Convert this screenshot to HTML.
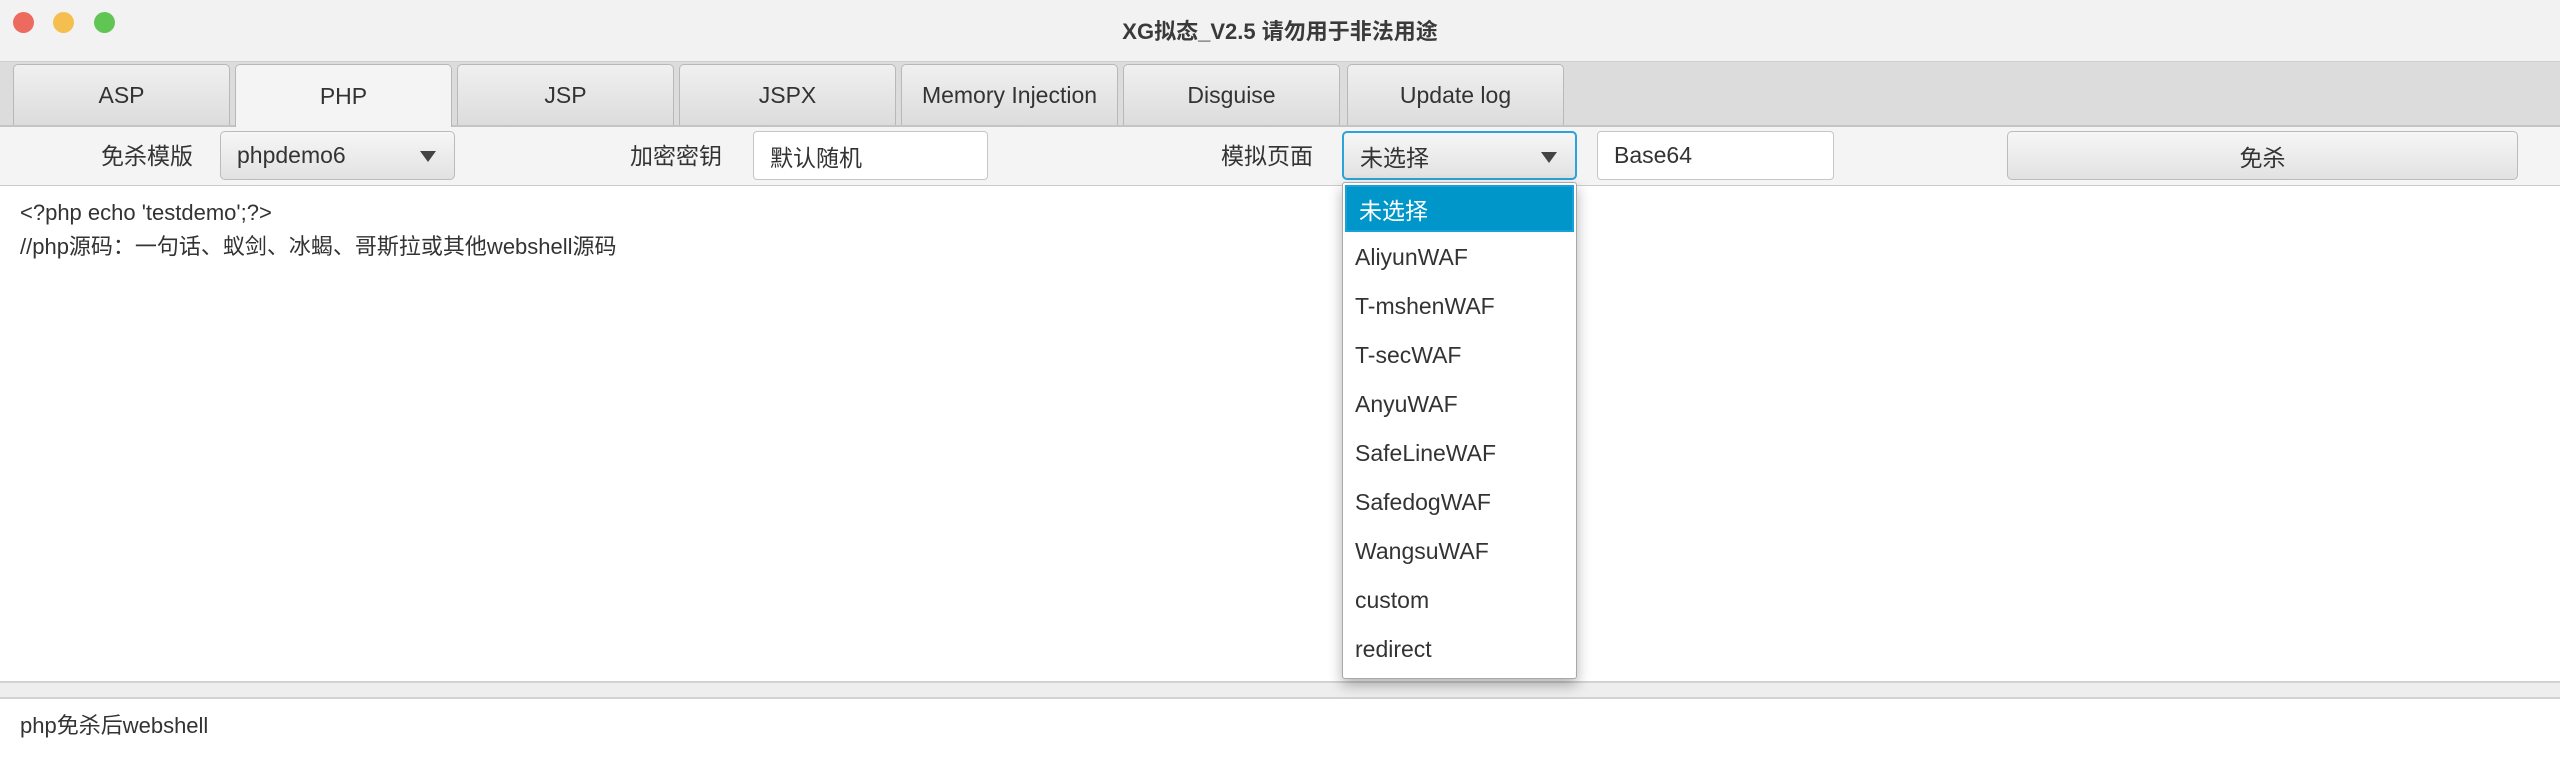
<!DOCTYPE html>
<html><head><meta charset="utf-8"><style>
*{box-sizing:border-box;margin:0;padding:0}
body{width:2560px;height:760px;overflow:hidden;background:#f4f4f4;font-family:"Liberation Sans","Noto Sans CJK SC",sans-serif;color:#333;position:relative;font-size:22px}
.abs{position:absolute}
.title{left:0;top:0;width:2560px;height:62px;background:#f2f2f2;border-bottom:1px solid #cfcfcf}
.dot{width:21px;height:21px;border-radius:50%;top:12px}
.tabs{left:0;top:62px;width:2560px;height:65px;background:#dcdcdc;border-bottom:2px solid #c4c4c4}
.tab{top:2px;width:217px;height:61px;border:1px solid #b8b8b8;border-bottom:none;border-radius:5px 5px 0 0;background:linear-gradient(#f0f0f0,#dcdcdc);display:flex;align-items:center;justify-content:center;font-size:23px;color:#333}
.tab.sel{background:#f4f4f4;height:63px}
.lbl{top:137px;font-size:23px;color:#333}
.combo{top:131px;height:49px;border:1px solid #bbb;border-radius:5px;background:linear-gradient(#f6f6f6,#e2e2e2);font-size:23px;padding:0 16px;display:flex;align-items:center}
.combo .arr{position:absolute;right:18px;top:19px;width:0;height:0;border-left:8px solid transparent;border-right:8px solid transparent;border-top:11px solid #444}
.field{top:131px;height:49px;border:1px solid #c6c6c6;border-radius:4px;background:#fff;font-size:23px;padding:0 16px;display:flex;align-items:center}
.area{left:0;width:2560px;background:#fff}
.drop{left:1342px;top:182px;width:235px;height:497px;background:#fff;border:1px solid #a8a8a8;border-radius:3px;box-shadow:0 6px 14px rgba(0,0,0,.3)}
.it{position:absolute;left:0;width:233px;height:49px;padding-left:12px;display:flex;align-items:center;font-size:23px;color:#333}
</style></head><body>
<div class="abs title"></div>
<div class="abs dot" style="left:13px;background:#ed6a5e"></div>
<div class="abs dot" style="left:53px;background:#f5bf4f"></div>
<div class="abs dot" style="left:94px;background:#61c554"></div>
<div class="abs" style="left:0;width:2560px;top:14px;text-align:center;font-weight:bold;font-size:22px;color:#3a3a3a">XG拟态_V2.5 请勿用于非法用途</div>
<div class="abs tabs"></div>
<div class="abs tab" style="left:13px;top:64px">ASP</div>
<div class="abs tab sel" style="left:235px;top:64px">PHP</div>
<div class="abs tab" style="left:457px;top:64px">JSP</div>
<div class="abs tab" style="left:679px;top:64px">JSPX</div>
<div class="abs tab" style="left:901px;top:64px">Memory Injection</div>
<div class="abs tab" style="left:1123px;top:64px">Disguise</div>
<div class="abs tab" style="left:1347px;top:64px">Update log</div>
<div class="abs lbl" style="left:101px">免杀模版</div>
<div class="abs combo" style="left:220px;width:235px">phpdemo6<span class="arr"></span></div>
<div class="abs lbl" style="left:630px">加密密钥</div>
<div class="abs field" style="left:753px;width:235px">默认随机</div>
<div class="abs lbl" style="left:1221px">模拟页面</div>
<div class="abs combo" style="left:1342px;width:235px;border:2px solid #2ba3d8">未选择<span class="arr"></span></div>
<div class="abs field" style="left:1597px;width:237px">Base64</div>
<div class="abs combo" style="left:2007px;width:511px;justify-content:center">免杀</div>
<div class="abs area" style="top:185px;height:496px;border-top:1px solid #ccc"></div>
<div class="abs" style="left:20px;top:196px;font-size:22px;line-height:34px;color:#333">&lt;?php echo 'testdemo';?&gt;<br>//php源码：一句话、蚁剑、冰蝎、哥斯拉或其他webshell源码</div>
<div class="abs" style="left:0;top:681px;width:2560px;height:18px;background:#eee;border-top:2px solid #d2d2d2;border-bottom:2px solid #d2d2d2"></div>
<div class="abs area" style="top:699px;height:61px"></div>
<div class="abs" style="left:20px;top:708px;font-size:22px">php免杀后webshell</div>
<div class="abs drop">
<div class="it" style="top:2px;left:2px;width:229px;height:47px;background:#0096c9;color:#fff;border:2px solid #1aa0d8">未选择</div>
<div class="it" style="top:50px">AliyunWAF</div>
<div class="it" style="top:99px">T-mshenWAF</div>
<div class="it" style="top:148px">T-secWAF</div>
<div class="it" style="top:197px">AnyuWAF</div>
<div class="it" style="top:246px">SafeLineWAF</div>
<div class="it" style="top:295px">SafedogWAF</div>
<div class="it" style="top:344px">WangsuWAF</div>
<div class="it" style="top:393px">custom</div>
<div class="it" style="top:442px">redirect</div>
</div>
</body></html>
